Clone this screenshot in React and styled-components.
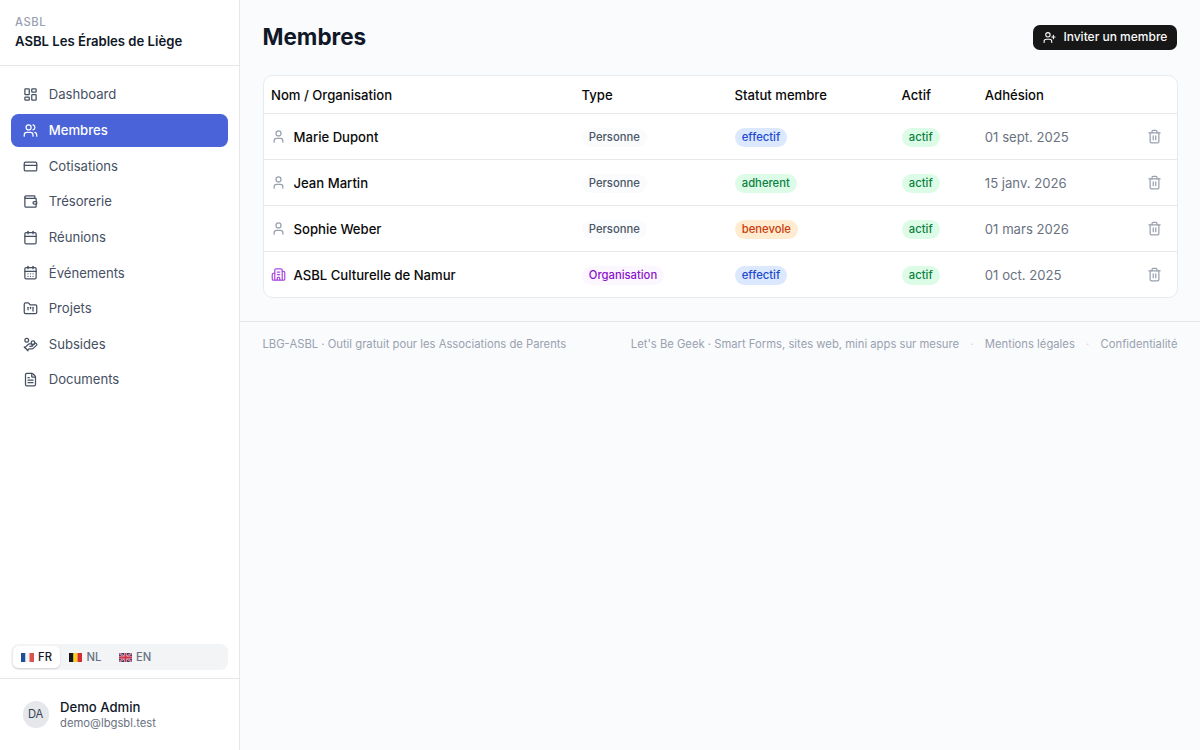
import React, { useState } from "react";
import styled, { createGlobalStyle } from "styled-components";
import {
    LayoutDashboard, Users, CreditCard, Wallet, Calendar, CalendarDays,
    FolderKanban, HandCoins, FileText, UserPlus, User, Building2, Trash2,
} from "lucide-react";

const NAV_ITEMS = [
    { label: "Dashboard", icon: LayoutDashboard },
    { label: "Membres", icon: Users },
    { label: "Cotisations", icon: CreditCard },
    { label: "Trésorerie", icon: Wallet },
    { label: "Réunions", icon: Calendar },
    { label: "Événements", icon: CalendarDays },
    { label: "Projets", icon: FolderKanban },
    { label: "Subsides", icon: HandCoins },
    { label: "Documents", icon: FileText },
];

const MEMBERS = [
    { name: "Marie Dupont", type: "Personne", status: "effectif", date: "01 sept. 2025" },
    { name: "Jean Martin", type: "Personne", status: "adherent", date: "15 janv. 2026" },
    { name: "Sophie Weber", type: "Personne", status: "benevole", date: "01 mars 2026" },
    { name: "ASBL Culturelle de Namur", type: "Organisation", status: "effectif", date: "01 oct. 2025" },
];

const BADGE_COLORS = {
    Personne: ["#fafbfd", "#4a5565"],
    Organisation: ["#fcf7ff", "#8a12cc"],
    effectif: ["#dbe8fe", "#1c4bd0"],
    adherent: ["#dcfce7", "#0b8040"],
    benevole: ["#ffebcf", "#c83c0c"],
    actif: ["#dcfce7", "#0b8040"],
};

const FlagFR = () => (
    <Flag viewBox="0 0 26 18">
        <rect width="9" height="18" fill="#1d4f9c" />
        <rect x="9" width="8" height="18" fill="#f3f4f6" />
        <rect x="17" width="9" height="18" fill="#d9534f" />
    </Flag>
);

const FlagBE = () => (
    <Flag viewBox="0 0 26 18">
        <rect width="9" height="18" fill="#15151a" />
        <rect x="9" width="8" height="18" fill="#fbd116" />
        <rect x="17" width="9" height="18" fill="#d62b35" />
    </Flag>
);

const FlagGB = () => (
    <Flag viewBox="0 0 26 18">
        <rect width="26" height="18" fill="#34406f" />
        <path d="M0 0L26 18M26 0L0 18" stroke="#e8d3dc" strokeWidth="3.4" />
        <path d="M0 0L26 18M26 0L0 18" stroke="#c8354c" strokeWidth="1.8" />
        <path d="M13 0V18M0 9H26" stroke="#f1dfe6" strokeWidth="5.4" />
        <path d="M13 0V18M0 9H26" stroke="#cf3048" strokeWidth="3.6" />
    </Flag>
);

const LANGS = [
    { code: "FR", flag: FlagFR },
    { code: "NL", flag: FlagBE },
    { code: "EN", flag: FlagGB },
];

const Sidebar = () => {
    const [current, setCurrent] = useState("Membres");
    const [lang, setLang] = useState("FR");

    return (
        <SidebarContainer>
            <OrgHeader>
                <OrgLabel>ASBL</OrgLabel>
                <OrgName>ASBL Les Érables de Liège</OrgName>
            </OrgHeader>

            <Nav>
                {NAV_ITEMS.map(({ label, icon: Icon }) => (
                    <NavItem key={label} $active={label === current} onClick={() => setCurrent(label)}>
                        <Icon />
                        {label}
                    </NavItem>
                ))}
            </Nav>

            <LangSwitch>
                {LANGS.map(({ code, flag: FlagIcon }) => (
                    <LangButton key={code} $active={code === lang} onClick={() => setLang(code)}>
                        <FlagIcon />
                        {code}
                    </LangButton>
                ))}
            </LangSwitch>

            <UserBlock>
                <Avatar>DA</Avatar>
                <div>
                    <UserName>Demo Admin</UserName>
                    <UserEmail>demo@lbgsbl.test</UserEmail>
                </div>
            </UserBlock>
        </SidebarContainer>
    );
};

const Badge = ({ value }) => {
    const [bg, color] = BADGE_COLORS[value];
    return <BadgePill $bg={bg} $color={color}>{value}</BadgePill>;
};

const MemberRow = ({ member }) => {
    const isOrg = member.type === "Organisation";
    return (
        <tr>
            <Cell>
                <MemberName $org={isOrg}>
                    {isOrg ? <Building2 /> : <User />}
                    {member.name}
                </MemberName>
            </Cell>
            <Cell><Badge value={member.type} /></Cell>
            <Cell><Badge value={member.status} /></Cell>
            <Cell><Badge value="actif" /></Cell>
            <Cell $muted>{member.date}</Cell>
            <Cell>
                <DeleteButton aria-label="Supprimer"><Trash2 /></DeleteButton>
            </Cell>
        </tr>
    );
};

const App = () => {
    return (
        <>
            <GlobalStyle />
            <Layout>
                <Sidebar />
                <Main>
                    <Content>
                        <PageHeader>
                            <h1>Membres</h1>
                            <InviteButton>
                                <UserPlus />
                                Inviter un membre
                            </InviteButton>
                        </PageHeader>

                        <Card>
                            <Table>
                                <thead>
                                    <tr>
                                        <HeadCell $width="20.7rem">Nom / Organisation</HeadCell>
                                        <HeadCell $width="10.2rem">Type</HeadCell>
                                        <HeadCell $width="11.14rem">Statut membre</HeadCell>
                                        <HeadCell $width="5.55rem">Actif</HeadCell>
                                        <HeadCell>Adhésion</HeadCell>
                                        <HeadCell $width="3rem" />
                                    </tr>
                                </thead>
                                <tbody>
                                    {MEMBERS.map((member) => (
                                        <MemberRow key={member.name} member={member} />
                                    ))}
                                </tbody>
                            </Table>
                        </Card>
                    </Content>

                    <Footer>
                        <span>LBG-ASBL · Outil gratuit pour les Associations de Parents</span>
                        <FooterLinks>
                            <span>Let's Be Geek · Smart Forms, sites web, mini apps sur mesure</span>
                            <Dot>·</Dot>
                            <span>Mentions légales</span>
                            <Dot>·</Dot>
                            <span>Confidentialité</span>
                        </FooterLinks>
                    </Footer>
                </Main>
            </Layout>
        </>
    );
};

// 1rem = 15px, every size below scales from it
const GlobalStyle = createGlobalStyle`
    html {
        font-size: 15px;
    }
    *, *::before, *::after {
        box-sizing: border-box;
    }
    body {
        margin: 0;
        font-family: Inter, "Liberation Sans", sans-serif;
        font-size: 0.875rem;
        line-height: 1.25rem;
        color: #0a0a0a;
        background-color: #fafbfd;
        -webkit-font-smoothing: antialiased;
    }
    button {
        font: inherit;
        border: none;
        background: none;
        padding: 0;
        cursor: pointer;
    }
    svg {
        flex-shrink: 0;
    }
`;

const Layout = styled.div`
    display: flex;
    height: 100vh;
    overflow: hidden;
`;

const SidebarContainer = styled.aside`
    display: flex;
    flex-direction: column;
    flex-shrink: 0;
    width: 16rem;
    background-color: white;
    border-right: 1px solid #e5e7eb;
`;

const OrgHeader = styled.div`
    padding: 1rem 1rem 0.95rem;
    border-bottom: 1px solid #e5e7eb;
`;

const OrgLabel = styled.div`
    font-size: 0.75rem;
    line-height: 1rem;
    font-weight: 500;
    letter-spacing: 0.05em;
    color: #99a1af;
`;

const OrgName = styled.div`
    margin-top: 0.125rem;
    font-weight: 600;
    color: #101828;
`;

const Nav = styled.nav`
    display: flex;
    flex-direction: column;
    flex: 1;
    gap: 0.125rem;
    padding: 0.8rem 0.75rem 0.75rem;
`;

const NavItem = styled.button`
    display: flex;
    align-items: center;
    gap: 0.75rem;
    height: 2.25rem;
    padding: 0 0.75rem;
    border-radius: 0.5rem;
    font-weight: ${({ $active }) => ($active ? 500 : 400)};
    text-align: left;
    color: ${({ $active }) => ($active ? "white" : "#465063")};
    background-color: ${({ $active }) => ($active ? "#4a63d9" : "transparent")};

    & svg {
        width: 1rem;
        height: 1rem;
    }
`;

const LangSwitch = styled.div`
    display: flex;
    gap: 0.125rem;
    margin: 0 0.75rem 0.5rem;
    padding: 0.125rem;
    border-radius: 0.5rem;
    background-color: #f3f4f6;
`;

const LangButton = styled.button`
    display: flex;
    align-items: center;
    gap: 0.29rem;
    padding: 0.25rem 0.51rem;
    border-radius: 0.375rem;
    font-size: 0.75rem;
    line-height: 1rem;
    font-weight: 500;
    color: ${({ $active }) => ($active ? "#101828" : "#6a7282")};
    background-color: ${({ $active }) => ($active ? "white" : "transparent")};
    box-shadow: ${({ $active }) => ($active ? "0 1px 2px rgba(0, 0, 0, 0.14)" : "none")};
`;

const Flag = styled.svg`
    width: 13px;
    height: 9px;
`;

const UserBlock = styled.div`
    display: flex;
    align-items: center;
    gap: 0.75rem;
    padding: 1.25rem 1.5rem;
    border-top: 1px solid #e5e7eb;
`;

const Avatar = styled.div`
    display: flex;
    align-items: center;
    justify-content: center;
    width: 1.75rem;
    height: 1.75rem;
    border-radius: 50%;
    font-size: 0.75rem;
    color: #364153;
    background-color: #e5e7eb;
`;

const UserName = styled.div`
    font-weight: 500;
    color: #101828;
`;

const UserEmail = styled.div`
    font-size: 0.75rem;
    line-height: 1rem;
    color: #6a7282;
`;

const Main = styled.main`
    flex: 1;
    min-width: 0;
`;

const Content = styled.div`
    display: flex;
    flex-direction: column;
    gap: 1.5rem;
    padding: 1.5rem 1.5rem 1.55rem;
`;

const PageHeader = styled.header`
    display: flex;
    align-items: center;
    justify-content: space-between;
    height: 2rem;

    & h1 {
        margin: 0 0 0.125rem;
        font-size: 1.5rem;
        line-height: 1.875rem;
        font-weight: 700;
        color: #101828;
    }
`;

const InviteButton = styled.button`
    display: flex;
    align-items: center;
    gap: 0.5rem;
    height: 1.6667rem;
    margin-right: 0.05rem;
    padding: 0 0.625rem;
    border-radius: 0.45rem;
    font-size: 0.8rem;
    font-weight: 500;
    color: #fafafa;
    background-color: #171717;

    & svg {
        width: 0.875rem;
        height: 0.875rem;
    }
`;

const Card = styled.div`
    overflow: hidden;
    border: 1px solid #e8eaed;
    border-radius: 0.625rem;
    background-color: white;
`;

const Table = styled.table`
    width: 100%;
    table-layout: fixed;
    border-collapse: separate;
    border-spacing: 0;

    & tbody tr:last-child td {
        border-bottom: none;
        height: 3rem;
    }
`;

const HeadCell = styled.th`
    width: ${({ $width }) => $width || "auto"};
    height: 2.5333rem;
    padding: 1px 0.5rem 0;
    border-bottom: 1px solid #e8e8e8;
    font-weight: 500;
    text-align: left;
    white-space: nowrap;
`;

const Cell = styled.td`
    height: 3.0667rem;
    padding: 1px 0.5rem 0;
    border-bottom: 1px solid #e8e8e8;
    white-space: nowrap;
    color: ${({ $muted }) => ($muted ? "#6a7282" : "#0a0a0a")};
`;

const MemberName = styled.div`
    display: flex;
    align-items: center;
    gap: 0.5rem;
    font-weight: 500;

    & svg {
        width: 1rem;
        height: 1rem;
        color: ${({ $org }) => ($org ? "#a94fe0" : "#99a1af")};
    }
`;

const BadgePill = styled.span`
    display: inline-flex;
    align-items: center;
    height: 1.25rem;
    padding: 0 0.485rem;
    border-radius: 1.25rem;
    vertical-align: middle;
    font-size: 0.75rem;
    line-height: 1rem;
    font-weight: 500;
    color: ${({ $color }) => $color};
    background-color: ${({ $bg }) => $bg};
`;

const DeleteButton = styled.button`
    display: flex;
    align-items: center;
    justify-content: center;
    width: 2rem;
    height: 2rem;
    color: #99a1af;

    & svg {
        width: 1rem;
        height: 1rem;
    }
`;

const Footer = styled.footer`
    display: flex;
    justify-content: space-between;
    padding: 1rem 1.5rem;
    border-top: 1px solid #e5e7eb;
    font-size: 0.75rem;
    line-height: 1rem;
    color: #99a1af;
`;

const FooterLinks = styled.div`
    display: flex;
    gap: 0.75rem;
`;

const Dot = styled.span`
    color: #d1d5dc;
`;

export default App;
